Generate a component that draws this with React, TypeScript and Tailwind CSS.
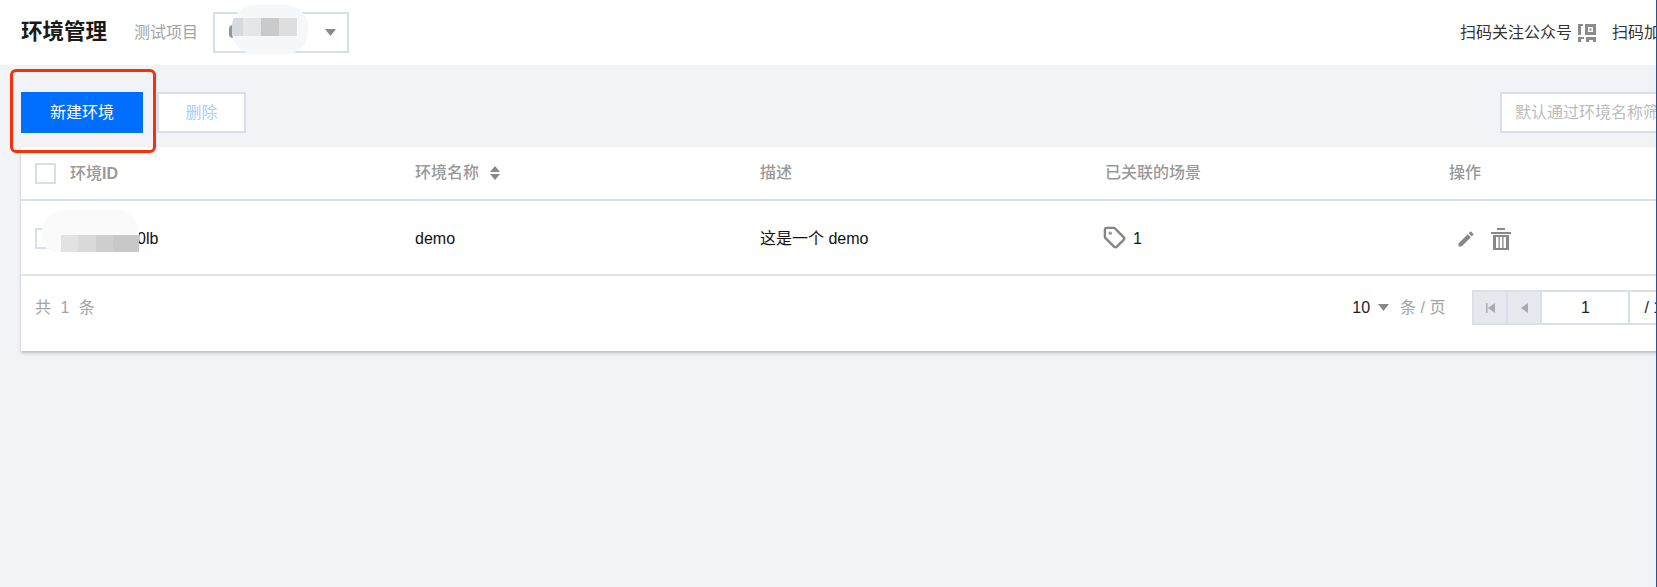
import { Tag } from "lucide-react";
import { MdEdit } from "react-icons/md";

const rowGrid = "grid grid-cols-[380px_345px_345px_344px_344px]";

const Caret = ({ className = "" }: { className?: string }) => (
  <svg width="11" height="7" viewBox="0 0 14 8" preserveAspectRatio="none" className={className}>
    <path d="M0 0h14L7 8z" fill="#888888" />
  </svg>
);

const QrIcon = () => (
  <svg width="18" height="18" viewBox="0 0 18 18" fill="#8a8a8a" className="shrink-0">
    <path d="M0 0h5v2H3v9H0z" />
    <path d="M7 0h11v11H7zM10 3v5h5V3z" fillRule="evenodd" />
    <path d="M11.5 4.5h2v2h-2zM0 13h6v2H3v3H0zM8 13h10v5h-3v-2h-4v2H8z" />
  </svg>
);

const TrashIcon = () => (
  <svg width="20" height="22" viewBox="0 0 20 22" fill="#888888">
    <path d="M6 0h8v2H6zM0 4h20v2H0zM2 7h16v15H2zM5 9v11h2.5V9zM8.8 9v11h2.4V9zM12.5 9v11H15V9z" fillRule="evenodd" />
  </svg>
);

const Checkbox = () => <div className="size-[21px] shrink-0 border-2 border-[#d8deea] bg-white" />;

const HeaderCell = ({ children }: { children: React.ReactNode }) => (
  <div className="flex h-full items-center pl-[14px] font-medium text-[#999999]">{children}</div>
);

const BodyCell = ({ children }: { children: React.ReactNode }) => (
  <div className="flex h-full items-center pl-[14px] pt-[2px] text-[#111111]">{children}</div>
);

export default function App() {
  return (
    <div
      className="relative h-[587px] w-[1657px] overflow-hidden bg-[#f2f3f7] text-[16px]"
      style={{ fontFamily: '"Liberation Sans", "Noto Sans CJK SC", sans-serif' }}
    >
      <header className="flex h-[65px] items-center bg-white pl-[21px]">
        <h1 className="text-[21.5px] font-semibold text-[#1a1a1a]">环境管理</h1>
        <span className="ml-[27px] text-[#a3a3a3]">测试项目</span>
        <div className="ml-[15px] flex h-[41px] w-[136px] items-center justify-end border-2 border-[#d8deea] pr-[11px]">
          <Caret />
        </div>
        <div className="ml-auto flex w-[197px] shrink-0 items-center whitespace-nowrap text-[#333333]">
          <span className="mr-[6px] shrink-0">扫码关注公众号</span>
          <QrIcon />
          <span className="ml-[16px] shrink-0">扫码加入群</span>
        </div>
      </header>

      <main className="w-[1800px] pl-[21px] pt-[27px]">
        <div className="flex items-center">
          <button className="h-[41px] w-[122px] bg-[#006eff] text-white">新建环境</button>
          <button className="ml-[14px] h-[41px] w-[89px] border-2 border-[#d8deea] bg-white text-[#a9cdfb]">删除</button>
          <div className="ml-[1254px] flex h-[41px] w-[300px] items-center border-2 border-[#d8deea] bg-white pl-[13px] text-[#bbbbbb]">
            默认通过环境名称筛选
          </div>
        </div>

        <div className="mt-[14px] bg-white shadow-[0_2px_3px_rgba(0,0,0,0.22)]">
          <div className={`${rowGrid} h-[54px] items-center border-b-2 border-[#d8deea]`}>
            <HeaderCell>
              <Checkbox />
              <span className="ml-[14px] mt-[2px]">
                环境<span className="font-bold">ID</span>
              </span>
            </HeaderCell>
            <HeaderCell>
              环境名称
              <svg width="10" height="14" viewBox="0 0 10 14" className="ml-[11px]" fill="#888888">
                <path d="M5 0l5 6H0zM5 14l5-6H0z" />
              </svg>
            </HeaderCell>
            <HeaderCell>描述</HeaderCell>
            <HeaderCell>已关联的场景</HeaderCell>
            <HeaderCell>操作</HeaderCell>
          </div>

          <div className={`${rowGrid} h-[75px] items-center border-b-2 border-[#dfe3ec]`}>
            <BodyCell>
              <Checkbox />
              <span className="ml-[81px]">0lb</span>
            </BodyCell>
            <BodyCell>demo</BodyCell>
            <BodyCell>这是一个 demo</BodyCell>
            <BodyCell>
              <Tag size={23} strokeWidth={2.5} color="#858585" className="-mt-[2px] -ml-[2px]" />
              <span className="ml-[7px]">1</span>
            </BodyCell>
            <BodyCell>
              <MdEdit size={20} color="#888888" className="ml-[7px]" />
              <div className="ml-[15px]">
                <TrashIcon />
              </div>
            </BodyCell>
          </div>

          <div className="flex h-[75px] items-center pb-[12px] pl-[14px]">
            <span className="tracking-[2.5px] text-[#a3a3a3]">共 1 条</span>
            <div className="ml-[1255px] flex items-center text-[#a3a3a3]">
              <span className="text-[#222222]">10</span>
              <Caret className="ml-[8px]" />
              <span className="ml-[11px]">条 / 页</span>
              <div className="ml-[27px] flex h-[35px] items-stretch border-2 border-[#d8deea]">
                <div className="flex w-[34px] items-center justify-center border-r-2 border-[#d8deea] bg-[#e6e8ee]">
                  <svg width="9" height="10" viewBox="0 0 9 10" fill="#a8abb2">
                    <path d="M0 0h1.5v10H0zM9 0v10L2 5z" />
                  </svg>
                </div>
                <div className="flex w-[34px] items-center justify-center border-r-2 border-[#d8deea] bg-[#e6e8ee]">
                  <svg width="7" height="10" viewBox="0 0 7 10" fill="#a8abb2">
                    <path d="M7 0v10L0 5z" />
                  </svg>
                </div>
                <div className="flex w-[86px] items-center justify-center bg-white text-[#222222]">1</div>
                <div className="flex w-[60px] items-center border-l-2 border-[#d8deea] pl-[14px] text-[#222222]">/ 1</div>
              </div>
            </div>
          </div>
        </div>
      </main>

      {/* select mosaic */}
      <div className="absolute left-[229px] top-[25px] h-[13px] w-[6px] rounded-l-[4px] bg-[#8c9aa0]" />
      <div className="absolute left-[232px] top-[5px] h-[49px] w-[76px] overflow-hidden rounded-[22px] bg-[#f6f7f8]">
        <div className="flex h-[18px] translate-y-[13px]">
          <div className="w-[11px] bg-[#d5dadd]" />
          <div className="w-[18px] bg-[#e4e6e8]" />
          <div className="w-[18px] bg-[#cacaca]" />
          <div className="w-[18px] bg-[#dedede]" />
        </div>
      </div>

      {/* id mosaic */}
      <div className="absolute left-[42px] top-[210px] h-[42px] w-[97px] overflow-hidden rounded-t-[22px] rounded-bl-[14px] bg-[#fafafa]">
        <div className="ml-[19px] mt-[25px] flex h-[17px]">
          <div className="w-[17px] bg-[#e2e2e2]" />
          <div className="w-[18px] bg-[#d9d9d9]" />
          <div className="w-[17px] bg-[#cfcfcf]" />
          <div className="w-[26px] bg-[#c8c8c8]" />
        </div>
      </div>

      {/* red annotation */}
      <div className="pointer-events-none absolute left-[10px] top-[69px] h-[84px] w-[146px] rounded-[6px] border-[3px] border-[#f5300b]" />

      {/* right edge line */}
      <div className="absolute right-0 top-0 h-full w-px bg-[#2f4f8f]" />
    </div>
  );
}
